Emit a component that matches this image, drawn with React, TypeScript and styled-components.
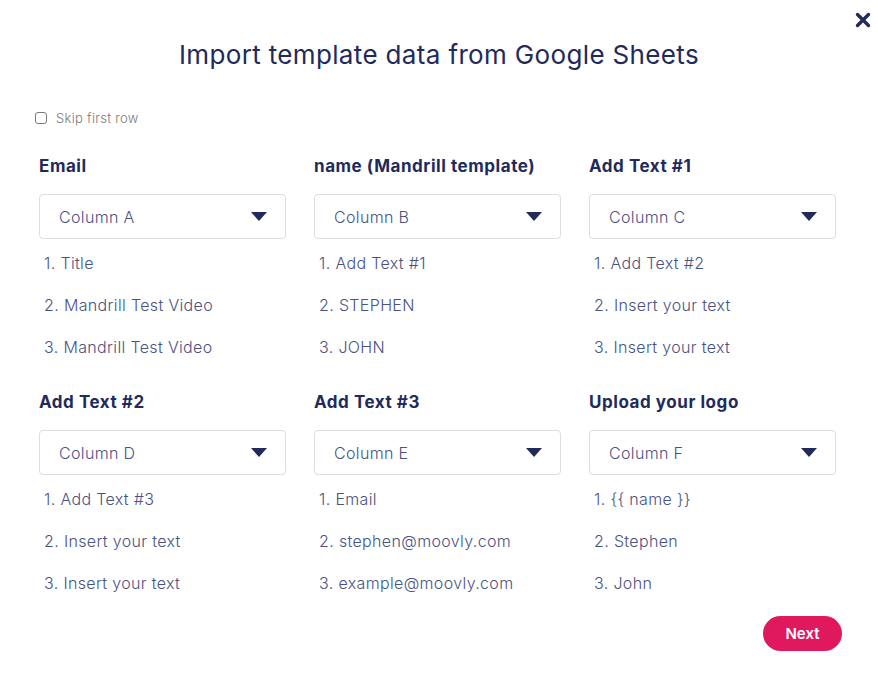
import * as React from 'react'
import styled, { createGlobalStyle } from 'styled-components'

const GlobalStyle = createGlobalStyle`
  * { box-sizing: border-box; }
  body {
    margin: 0;
    background: #fff;
    font-family: Inter, 'Noto Sans', sans-serif;
  }
`

const Modal = styled.div`
  position: relative;
  width: 878px;
  height: 700px;
  background: #fff;
  padding: 38px 0 0 0;
`

const Close = styled.button`
  position: absolute;
  top: 12px;
  right: 7px;
  width: 16px;
  height: 16px;
  padding: 0;
  border: none;
  background: none;
  cursor: pointer;
`

const Title = styled.h1`
  margin: 0;
  text-align: center;
  font-size: 26px;
  letter-spacing: 0.35px;
  line-height: 34px;
  font-weight: 400;
  color: #222a5c;
`

const SkipRow = styled.label`
  display: flex;
  align-items: center;
  gap: 9px;
  margin: 38px 0 0 35px;
  font-size: 13px;
  letter-spacing: 0.3px;
  font-weight: 300;
  color: #7a7a7a;
`

const Box = styled.span`
  width: 12px;
  height: 12px;
  border: 1px solid #7a7a7a;
  border-radius: 3px;
`

const Grid = styled.div`
  display: grid;
  grid-template-columns: repeat(3, 247px);
  column-gap: 28px;
  row-gap: 24px;
  padding: 30px 0 0 39px;
`

const Field = styled.div`
  display: flex;
  flex-direction: column;
`

const Label = styled.div`
  font-size: 17px;
  letter-spacing: 0.55px;
  line-height: 20px;
  font-weight: 700;
  color: #222a5c;
  margin-bottom: 18px;
`

const Select = styled.div`
  display: flex;
  align-items: center;
  justify-content: space-between;
  height: 45px;
  padding: 0 18px 0 19px;
  border: 1px solid #dcdde3;
  border-radius: 4px;
  font-size: 16px;
  letter-spacing: 0.35px;
  font-weight: 300;
  color: #4a5282;
  margin-bottom: 3px;
`

const Item = styled.div`
  height: 42px;
  line-height: 42px;
  padding-left: 5px;
  font-size: 16px;
  letter-spacing: 0.35px;
  font-weight: 300;
  color: #4a5282;
`

const Footer = styled.div`
  display: flex;
  justify-content: flex-end;
  padding: 12px 36px 0 0;
`

const NextButton = styled.button`
  width: 79px;
  height: 35px;
  border: none;
  border-radius: 18px;
  background: #e0195f;
  color: #fff;
  font-family: inherit;
  font-size: 15px;
  font-weight: 600;
  cursor: pointer;
`

const fields = [
  { label: 'Email', column: 'Column A', items: ['Title', 'Mandrill Test Video', 'Mandrill Test Video'] },
  { label: 'name (Mandrill template)', column: 'Column B', items: ['Add Text #1', 'STEPHEN', 'JOHN'] },
  { label: 'Add Text #1', column: 'Column C', items: ['Add Text #2', 'Insert your text', 'Insert your text'] },
  { label: 'Add Text #2', column: 'Column D', items: ['Add Text #3', 'Insert your text', 'Insert your text'] },
  { label: 'Add Text #3', column: 'Column E', items: ['Email', 'stephen@moovly.com', 'example@moovly.com'] },
  { label: 'Upload your logo', column: 'Column F', items: ['{{ name }}', 'Stephen', 'John'] },
]

const Caret = () => (
  <svg width="16" height="9" viewBox="0 0 16 9">
    <path d="M0 0 H16 L8 9 Z" fill="#222a5c" />
  </svg>
)

export default function App() {
  return (
    <>
      <GlobalStyle />
      <Modal>
        <Close aria-label="close">
          <svg width="16" height="16" viewBox="0 0 16 16">
            <path d="M2.5 2.5 L13.5 13.5 M13.5 2.5 L2.5 13.5" stroke="#222a5c" strokeWidth="3.4" strokeLinecap="round" />
          </svg>
        </Close>
        <Title>Import template data from Google Sheets</Title>
        <SkipRow>
          <Box />
          Skip first row
        </SkipRow>
        <Grid>
          {fields.map(f => (
            <Field key={f.column}>
              <Label>{f.label}</Label>
              <Select>
                <span>{f.column}</span>
                <Caret />
              </Select>
              {f.items.map((it, i) => (
                <Item key={i}>{i + 1}. {it}</Item>
              ))}
            </Field>
          ))}
        </Grid>
        <Footer>
          <NextButton>Next</NextButton>
        </Footer>
      </Modal>
    </>
  )
}
